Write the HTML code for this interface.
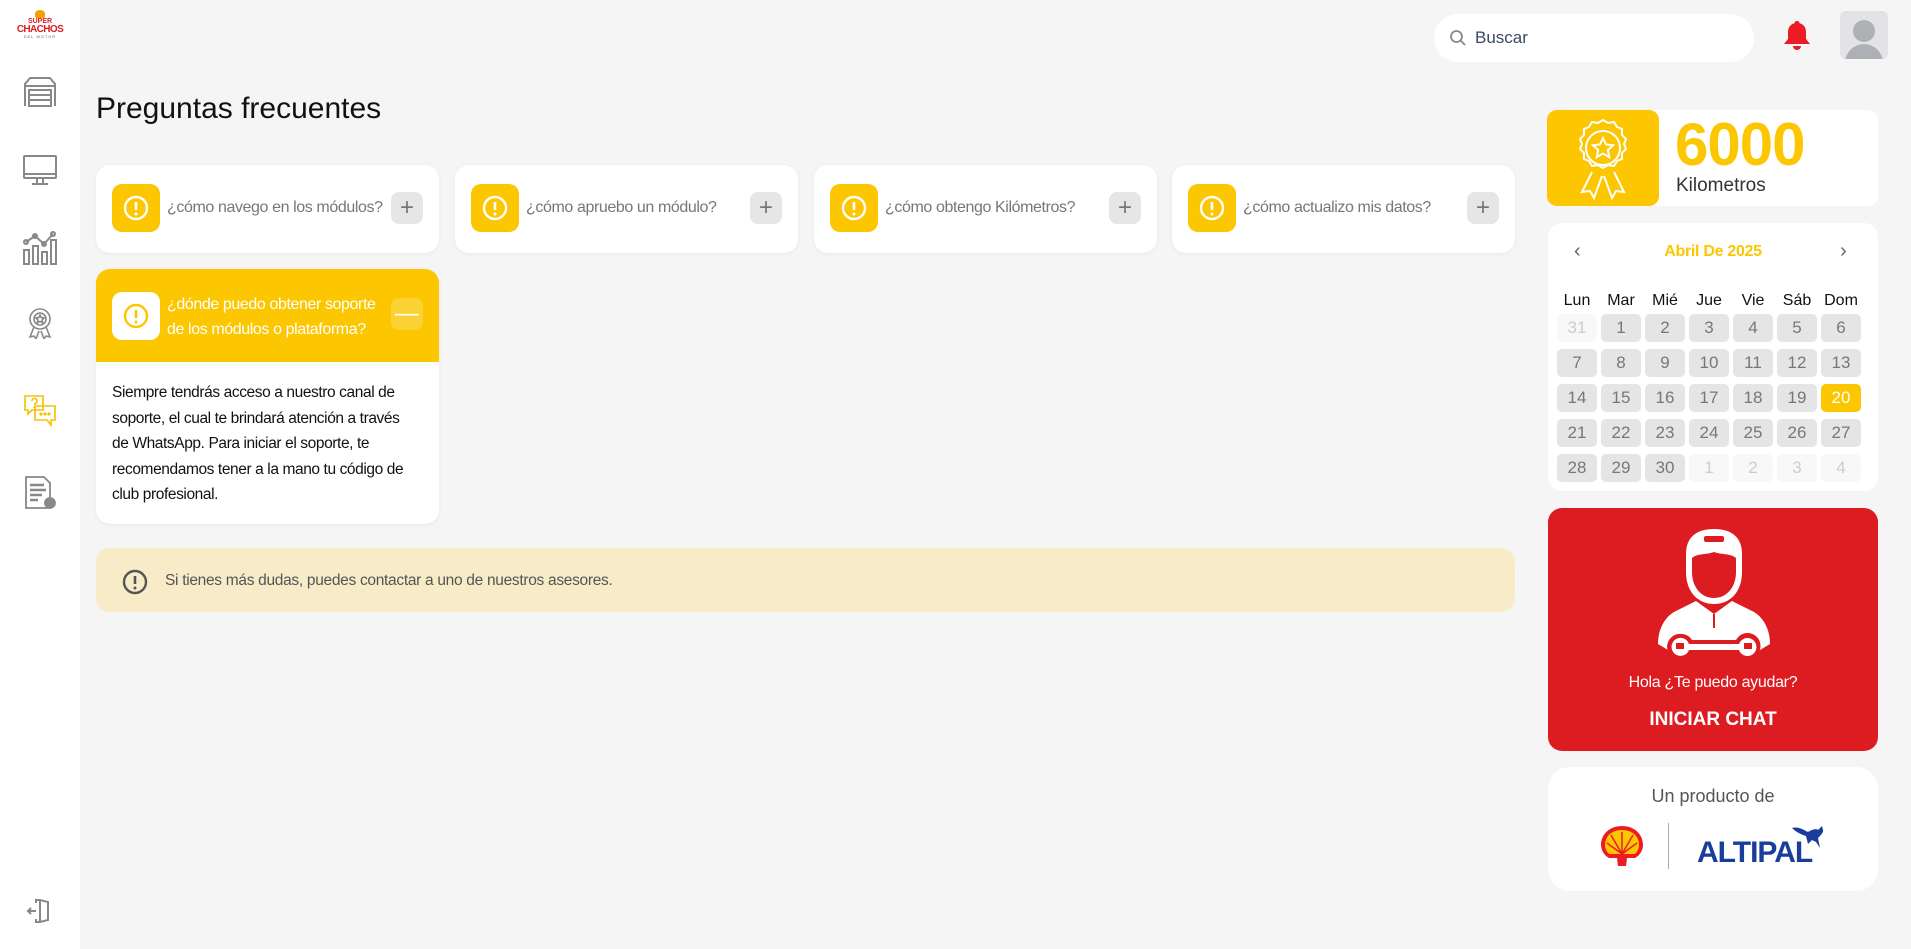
<!DOCTYPE html>
<html><head><meta charset="utf-8"><style>
*{margin:0;padding:0;box-sizing:border-box}
body{width:1911px;height:949px;background:#f5f5f5;font-family:"Liberation Sans",sans-serif;position:relative;overflow:hidden}
.abs{position:absolute}
.side{left:0;top:0;width:80px;height:949px;background:#fff}
.card{background:#fff;border-radius:14px;box-shadow:0 1px 4px rgba(0,0,0,.06)}
.ib{width:48px;height:48px;border-radius:10px;background:#fcc600;display:flex;align-items:center;justify-content:center}
.pl{width:32px;height:32px;border-radius:8px;background:#e6e6e6;color:#777;font-size:24px;display:flex;align-items:center;justify-content:center;line-height:1}
.q{font-size:16px;color:#777;letter-spacing:-.4px}
.cell{position:absolute;width:40px;height:28px;border-radius:5px;background:#e5e5e5;color:#777;font-size:17px;display:flex;align-items:center;justify-content:center}
.cell.f{background:#f8f8f8;color:#ccc}
.cell.s{background:#fcc600;color:#fff}
.dn{position:absolute;top:292px;width:40px;text-align:center;font-size:16px;color:#111}
</style></head><body>
<div class="abs side"></div>
<!-- logo -->
<div class="abs" style="left:16px;top:10px;width:48px;height:38px;text-align:center;line-height:1">
<div style="width:10px;height:8px;background:#f5a000;border-radius:50% 50% 20% 20%;margin:0 auto"></div>
<div style="font-size:7px;font-weight:bold;color:#dd1c22">SUPER</div>
<div style="font-size:10px;font-weight:bold;color:#dd1c22;letter-spacing:-.6px">CHACHOS</div>
<div style="font-size:4px;color:#666;letter-spacing:1px">DEL MOTOR</div>
</div>
<svg class="abs" style="left:22px;top:76px" width="36" height="34" viewBox="0 0 36 34" fill="none" stroke="#888" stroke-width="2"><path d="M3 30V8L8 2H28L33 8V30"/><path d="M3 10H33"/><rect x="7" y="14" width="22" height="16"/><path d="M7 19H29M7 24H29"/></svg>
<svg class="abs" style="left:22px;top:154px" width="36" height="34" viewBox="0 0 36 34" fill="none" stroke="#888" stroke-width="2"><rect x="2" y="2" width="32" height="22" rx="1"/><path d="M2 20H34M15 24V29M21 24V29M10 30H26"/></svg>
<svg class="abs" style="left:22px;top:230px" width="36" height="36" viewBox="0 0 36 36" fill="none" stroke="#888" stroke-width="2"><rect x="2" y="20" width="5" height="14"/><rect x="11" y="16" width="5" height="18"/><rect x="20" y="22" width="5" height="12"/><rect x="29" y="10" width="5" height="24"/><path d="M4 12L13 6L22 14L31 4"/><circle cx="4" cy="12" r="2"/><circle cx="13" cy="6" r="2"/><circle cx="22" cy="14" r="2"/><circle cx="31" cy="4" r="2"/></svg>
<svg class="abs" style="left:26px;top:307px" width="28" height="32" viewBox="0 0 28 32" fill="none" stroke="#888" stroke-width="1.6"><circle cx="14" cy="12" r="10"/><circle cx="14" cy="12" r="6"/><path d="M14 8l1.3 2.6 2.8.4-2 2 .5 2.8-2.6-1.4-2.6 1.4.5-2.8-2-2 2.8-.4z"/><path d="M8 20L4 30l4-1 2 3 3-8M20 20l4 10-4-1-2 3-3-8"/></svg>
<svg class="abs" style="left:23px;top:394px" width="34" height="36" viewBox="0 0 34 36" fill="none" stroke="#f5c000" stroke-width="1.6"><path d="M2 2H20V16H9L5 20V16H2Z"/><path d="M12 18V12H32V26H28V31L24 26H12Z"/><path d="M9 7a2.5 2.5 0 1 1 3 2.4V11M11 13v1"/><circle cx="18" cy="20" r=".8"/><circle cx="22" cy="20" r=".8"/><circle cx="26" cy="20" r=".8"/></svg>
<svg class="abs" style="left:24px;top:475px" width="34" height="36" viewBox="0 0 34 36" fill="none" stroke="#888" stroke-width="1.8"><path d="M2 2H20L26 8V33H2Z"/><path d="M6 10H20M6 15H22M6 20H18M6 25H14" stroke-width="2.5"/><circle cx="26" cy="28" r="5" fill="#888"/></svg>
<svg class="abs" style="left:26px;top:897px" width="28" height="28" viewBox="0 0 28 28" fill="none" stroke="#888" stroke-width="2"><path d="M10 6V3H14L22 5V23L14 25H10V22"/><path d="M14 3V25"/><path d="M2 14H10M5 11L2 14L5 17"/></svg>

<!-- top bar -->
<div class="abs" style="left:1434px;top:14px;width:320px;height:48px;background:#fff;border-radius:24px"></div>
<svg class="abs" style="left:1449px;top:29px" width="18" height="18" viewBox="0 0 18 18" fill="none" stroke="#888" stroke-width="1.8"><circle cx="7.5" cy="7.5" r="5.5"/><path d="M11.5 11.5L16 16"/></svg>
<div class="abs" style="left:1475px;top:28px;font-size:17px;color:#3a4a66">Buscar</div>
<svg class="abs" style="left:1782px;top:19px" width="30" height="34" viewBox="0 0 30 34"><path d="M15 2c1.5 0 2.5 1 2.5 2.3C22 5.5 24 9 24 13v7l4 5H2l4-5v-7c0-4 2-7.5 6.5-8.7C12.5 3 13.5 2 15 2z" fill="#ed1c24"/><path d="M11 27h8a4 4 0 0 1-8 0z" fill="#ed1c24"/></svg>
<div class="abs" style="left:1840px;top:11px;width:48px;height:48px;background:#e3e3e5;border-radius:6px;overflow:hidden">
<div style="position:absolute;left:13px;top:9px;width:22px;height:22px;border-radius:50%;background:#adb1b5"></div>
<div style="position:absolute;left:5px;top:33px;width:38px;height:24px;border-radius:19px 19px 0 0;background:#adb1b5"></div></div>

<div class="abs" style="left:96px;top:92px;font-size:30px;color:#111">Preguntas frecuentes</div>

<!-- cards -->
<div class="abs card" style="left:96px;top:165px;width:343px;height:88px"></div>
<div class="abs card" style="left:455px;top:165px;width:343px;height:88px"></div>
<div class="abs card" style="left:814px;top:165px;width:343px;height:88px"></div>
<div class="abs card" style="left:1172px;top:165px;width:343px;height:88px"></div>
<svg width="0" height="0" style="position:absolute"><defs><g id="ex"><circle cx="14" cy="14" r="11" fill="none" stroke-width="2.4"/><path d="M14 8v8" stroke-width="2.6"/><circle cx="14" cy="20" r="1.5" stroke="none"/></g></defs></svg>
<div class="abs ib" style="left:112px;top:184px"><svg width="28" height="28" stroke="#fff" fill="#fff"><use href="#ex"/></svg></div>
<div class="abs q" style="left:167px;top:199px">¿cómo navego en los módulos?</div>
<div class="abs pl" style="left:391px;top:192px">+</div>
<div class="abs ib" style="left:471px;top:184px"><svg width="28" height="28" stroke="#fff" fill="#fff"><use href="#ex"/></svg></div>
<div class="abs q" style="left:526px;top:199px">¿cómo apruebo un módulo?</div>
<div class="abs pl" style="left:750px;top:192px">+</div>
<div class="abs ib" style="left:830px;top:184px"><svg width="28" height="28" stroke="#fff" fill="#fff"><use href="#ex"/></svg></div>
<div class="abs q" style="left:885px;top:199px">¿cómo obtengo Kilómetros?</div>
<div class="abs pl" style="left:1109px;top:192px">+</div>
<div class="abs ib" style="left:1188px;top:184px"><svg width="28" height="28" stroke="#fff" fill="#fff"><use href="#ex"/></svg></div>
<div class="abs q" style="left:1243px;top:199px">¿cómo actualizo mis datos?</div>
<div class="abs pl" style="left:1467px;top:192px">+</div>

<!-- expanded -->
<div class="abs card" style="left:96px;top:269px;width:343px;height:255px;overflow:hidden">
<div style="height:93px;background:#fcc600"></div></div>
<div class="abs ib" style="left:112px;top:292px;background:#fff"><svg width="28" height="28" stroke="#fcc600" fill="#fcc600"><use href="#ex"/></svg></div>
<div class="abs" style="left:167px;top:292px;font-size:16px;color:#fff;line-height:25px;letter-spacing:-.4px">¿dónde puedo obtener soporte<br>de los módulos o plataforma?</div>
<div class="abs pl" style="left:391px;top:298px;background:rgba(255,255,255,.2);color:#fff">—</div>
<div class="abs" style="left:112px;top:380px;width:320px;font-size:15.5px;color:#111;line-height:25.6px;letter-spacing:-.4px">Siempre tendrás acceso a nuestro canal de<br>soporte, el cual te brindará atención a través<br>de WhatsApp. Para iniciar el soporte, te<br>recomendamos tener a la mano tu código de<br>club profesional.</div>

<!-- alert -->
<div class="abs" style="left:96px;top:548px;width:1419px;height:64px;background:#f7ebc8;border-radius:14px"></div>
<svg class="abs" style="left:121px;top:568px" width="28" height="28" stroke="#555" fill="#555"><use href="#ex"/></svg>
<div class="abs" style="left:165px;top:572px;font-size:15.5px;color:#555;letter-spacing:-.3px">Si tienes más dudas, puedes contactar a uno de nuestros asesores.</div>

<!-- km card -->
<div class="abs" style="left:1548px;top:110px;width:330px;height:96px;background:#fff;border-radius:10px"></div>
<div class="abs" style="left:1547px;top:110px;width:112px;height:96px;background:#fcc600;border-radius:10px"></div>
<svg class="abs" style="left:1570px;top:116px" width="66" height="84" viewBox="0 0 66 84" fill="none" stroke="#fff" stroke-width="2"><path d="M33 4l5 3 6-1 3 5 5 2 0 6 4 4-2 5 2 5-4 4 0 6-5 2-3 5-6-1-5 3-5-3-6 1-3-5-5-2 0-6-4-4 2-5-2-5 4-4 0-6 5-2 3-5 6 1z"/><circle cx="33" cy="32" r="17"/><path d="M33 22l3 6.5 7 .8-5.2 4.8 1.5 7-6.3-3.6-6.3 3.6 1.5-7L23 29.3l7-.8z"/><path d="M22 56L12 76l8-1 4 7 8-22M44 56l10 20-8-1-4 7-8-22"/></svg>
<div class="abs" style="left:1675px;top:110px;font-size:60px;font-weight:bold;color:#fcc600;letter-spacing:-1px">6000</div>
<div class="abs" style="left:1676px;top:175px;font-size:19px;color:#333">Kilometros</div>

<!-- calendar -->
<div class="abs" style="left:1548px;top:223px;width:330px;height:268px;background:#fff;border-radius:14px"></div>
<div class="abs" style="left:1574px;top:240px;font-size:20px;color:#666">‹</div>
<div class="abs" style="left:1840px;top:240px;font-size:20px;color:#666">›</div>
<div class="abs" style="left:1548px;top:243px;width:330px;text-align:center;font-size:16px;font-weight:bold;color:#fcc600;letter-spacing:-.3px">Abril De 2025</div>
<div class="dn" style="left:1557px">Lun</div><div class="dn" style="left:1601px">Mar</div><div class="dn" style="left:1645px">Mié</div><div class="dn" style="left:1689px">Jue</div><div class="dn" style="left:1733px">Vie</div><div class="dn" style="left:1777px">Sáb</div><div class="dn" style="left:1821px">Dom</div>
<div class="cell f" style="left:1557px;top:314px">31</div><div class="cell" style="left:1601px;top:314px">1</div><div class="cell" style="left:1645px;top:314px">2</div><div class="cell" style="left:1689px;top:314px">3</div><div class="cell" style="left:1733px;top:314px">4</div><div class="cell" style="left:1777px;top:314px">5</div><div class="cell" style="left:1821px;top:314px">6</div>
<div class="cell" style="left:1557px;top:349px">7</div><div class="cell" style="left:1601px;top:349px">8</div><div class="cell" style="left:1645px;top:349px">9</div><div class="cell" style="left:1689px;top:349px">10</div><div class="cell" style="left:1733px;top:349px">11</div><div class="cell" style="left:1777px;top:349px">12</div><div class="cell" style="left:1821px;top:349px">13</div>
<div class="cell" style="left:1557px;top:384px">14</div><div class="cell" style="left:1601px;top:384px">15</div><div class="cell" style="left:1645px;top:384px">16</div><div class="cell" style="left:1689px;top:384px">17</div><div class="cell" style="left:1733px;top:384px">18</div><div class="cell" style="left:1777px;top:384px">19</div><div class="cell s" style="left:1821px;top:384px">20</div>
<div class="cell" style="left:1557px;top:419px">21</div><div class="cell" style="left:1601px;top:419px">22</div><div class="cell" style="left:1645px;top:419px">23</div><div class="cell" style="left:1689px;top:419px">24</div><div class="cell" style="left:1733px;top:419px">25</div><div class="cell" style="left:1777px;top:419px">26</div><div class="cell" style="left:1821px;top:419px">27</div>
<div class="cell" style="left:1557px;top:454px">28</div><div class="cell" style="left:1601px;top:454px">29</div><div class="cell" style="left:1645px;top:454px">30</div><div class="cell f" style="left:1689px;top:454px">1</div><div class="cell f" style="left:1733px;top:454px">2</div><div class="cell f" style="left:1777px;top:454px">3</div><div class="cell f" style="left:1821px;top:454px">4</div>

<!-- red chat -->
<div class="abs" style="left:1548px;top:508px;width:330px;height:243px;background:#dd1c22;border-radius:14px"></div>
<svg class="abs" style="left:1654px;top:526px" width="120" height="140" viewBox="0 0 120 140">
<path d="M32 28C32 10 44 3 60 3S88 10 88 28V46C88 66 76 78 60 78S32 66 32 46Z" fill="#fff"/>
<path d="M38 32C44 27 52 29 60 26C68 29 76 27 82 32V46C82 62 72 72 60 72S38 62 38 46Z" fill="#dd1c22"/>
<rect x="50" y="10" width="20" height="6" rx="2" fill="#dd1c22"/>
<path d="M42 75L60 88L78 75L100 86C110 92 116 104 116 118L106 124L14 124L4 118C4 104 10 92 20 86Z" fill="#fff"/>
<path d="M60 88V102" stroke="#dd1c22" stroke-width="2"/>
<path d="M28 108a13 13 0 1 0 10 18h44a13 13 0 1 0 0-12H38a13 13 0 0 0-10-6z" fill="#dd1c22"/>
<path d="M28 112a9 9 0 1 0 7 12h50a9 9 0 1 0 0-6H35a9 9 0 0 0-7-6z" fill="#fff"/>
<rect x="22" y="117" width="8" height="6" fill="#dd1c22"/><rect x="90" y="117" width="8" height="6" fill="#dd1c22"/>
</svg>
<div class="abs" style="left:1548px;top:674px;width:330px;text-align:center;font-size:16px;color:#fff;letter-spacing:-.3px">Hola ¿Te puedo ayudar?</div>
<div class="abs" style="left:1548px;top:709px;width:330px;text-align:center;font-size:19px;font-weight:900;color:#fff">INICIAR CHAT</div>

<!-- product -->
<div class="abs" style="left:1548px;top:767px;width:330px;height:124px;background:#fff;border-radius:22px"></div>
<div class="abs" style="left:1548px;top:786px;width:330px;text-align:center;font-size:18px;color:#555">Un producto de</div>
<svg class="abs" style="left:1599px;top:824px" width="46" height="44" viewBox="0 0 46 44"><path d="M23 2C11 2 2 10 2 21c0 5 3 9 5 11l3 2h8l1 8h8l1-8h8l3-2c2-2 5-6 5-11C44 10 35 2 23 2z" fill="#ed1c24"/><path d="M23 6C13 6 6 12 6 21c0 4 2 7 4 9h26c2-2 4-5 4-9 0-9-7-15-17-15z" fill="#fcc600"/><path d="M23 30V8M23 30L12 11M23 30L34 11M23 30L8 19M23 30L38 19" stroke="#ed1c24" stroke-width="1.5"/></svg>
<div class="abs" style="left:1668px;top:823px;width:1px;height:46px;background:#aaa"></div>
<div class="abs" style="left:1697px;top:836px;font-size:30px;font-weight:bold;color:#1a3d9c;letter-spacing:-1px">ALTIPAL</div>
<svg class="abs" style="left:1790px;top:824px" width="36" height="26" viewBox="0 0 36 26"><path d="M2 4C8 2 14 6 18 8C22 6 26 4 28 6L32 2L33 6C34 8 30 12 28 14L30 24L26 18L22 16L18 20L16 12C10 10 6 8 2 4Z" fill="#1a3d9c"/></svg>
</body></html>
